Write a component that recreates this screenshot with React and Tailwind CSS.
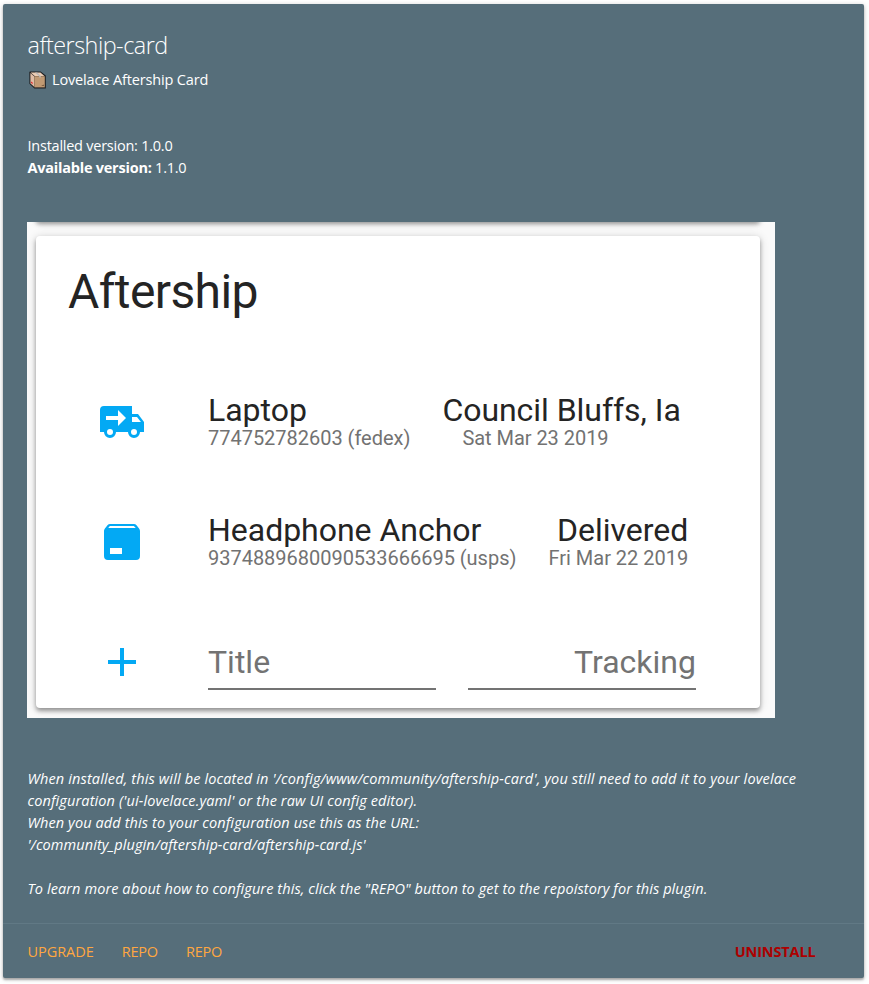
const TRUCK =
  'M3,4A2,2 0 0,0 1,6V17H3A3,3 0 0,0 6,20A3,3 0 0,0 9,17H15A3,3 0 0,0 18,20A3,3 0 0,0 21,17H23V12L20,8H17V4M10,6L14,10L10,14V11H4V9H10M17,9.5H19.5L21.47,12H17M6,15.5A1.5,1.5 0 0,1 7.5,17A1.5,1.5 0 0,1 6,18.5A1.5,1.5 0 0,1 4.5,17A1.5,1.5 0 0,1 6,15.5M18,15.5A1.5,1.5 0 0,1 19.5,17A1.5,1.5 0 0,1 18,18.5A1.5,1.5 0 0,1 16.5,17A1.5,1.5 0 0,1 18,15.5Z';
const PACKAGE =
  'M5.12,5L5.93,4H17.93L18.87,5M20.54,5.23L19.15,3.55C18.88,3.21 18.47,3 18,3H6C5.53,3 5.12,3.21 4.84,3.55L3.46,5.23C3.17,5.57 3,6 3,6.5V19A2,2 0 0,0 5,21H19A2,2 0 0,0 21,19V6.5C21,6 20.83,5.57 20.54,5.23M6,18H12V15H6V18Z';
const PLUS = 'M19,13H13V19H11V13H5V11H11V5H13V11H19V13Z';

function Icon({ path }) {
  return (
    <svg viewBox="0 0 24 24" className="h-12 w-12 shrink-0 fill-[#03a9f4]">
      <path fillRule="evenodd" d={path} />
    </svg>
  );
}

function ParcelEmoji() {
  return (
    <svg viewBox="0 0 18 18" className="h-[18px] w-[18px]">
      <path d="M1 .4h10.6l5.2 4.2v12.8H5.4L.4 12.8V1z" fill="#1d1d1f" />
      <path d="M1.6 1.4h9.8l4 3.6H5.6z" fill="#eccdb4" />
      <path d="M1.4 2l4 3.4v10.6l-4-3.6z" fill="#e0bda5" />
      <path d="M5.4 5.2h10.4v11.2H5.4z" fill="#c19a73" />
      <path d="M5.8 1.4h2.4l3.6 3.6v1.4h-1.6V5.2z" fill="#bdbab8" />
      <path d="M2 10.4l1.6 1v1.8L2 11.8z" fill="#e5262f" />
      <path d="M12.2 15h2.6v-1.6z" fill="#6d5139" />
    </svg>
  );
}

function Lines({ primary, secondary, secondaryClass = '' }) {
  return (
    <>
      <div className="h-8 whitespace-nowrap text-[32px] leading-[32px] text-[#242424]">{primary}</div>
      <div className="h-6 whitespace-nowrap text-[20px] leading-[24px] text-[#727272]">
        <span className={secondaryClass}>{secondary}</span>
      </div>
    </>
  );
}

function Parcel({ icon, title, number, children }) {
  return (
    <div className="flex h-[120px] pl-[62px] pt-4">
      <Icon path={icon} />
      <div className="-mt-1 ml-[62px] tracking-[-0.02px]">
        <Lines primary={title} secondary={number} />
      </div>
      {children}
    </div>
  );
}

export default function App() {
  return (
    <div className="h-[984px] bg-white pl-[3px] pt-1">
      <div className="flex h-[974px] w-[861px] flex-col rounded-[2px] bg-[#566e7a] font-['Open_Sans',sans-serif] text-[14.5px] leading-[22px] text-white shadow-[0_2px_2px_rgba(0,0,0,0.24),0_1px_5px_rgba(0,0,0,0.22)]">
        <div className="h-[919px] pl-[24.5px] pt-[23px]">
          <h1 className="h-9 whitespace-nowrap text-[23.4px] font-light leading-9 tracking-[-0.5px]">aftership-card</h1>
          <div className="mt-1.5 flex h-[22px] items-center gap-[5px] pl-[1.5px] tracking-[-0.15px]">
            <ParcelEmoji />
            <span>Lovelace Aftership Card</span>
          </div>
          <div className="mt-11 whitespace-nowrap tracking-[-0.24px]">
            <p>Installed version: 1.0.0</p>
            <p><b className="font-bold tracking-[-0.23px]">Available version:</b> 1.1.0</p>
          </div>

          <div className="-ml-[0.5px] mt-[43px] h-[496px] w-[748px] overflow-hidden bg-[#fafafa] pl-[9px] font-['Roboto',sans-serif] tracking-normal">
            <div className="-mt-5 h-5 w-[724px] rounded-[4px] bg-white shadow-[0_2px_4px_rgba(0,0,0,0.35),0_1px_8px_rgba(0,0,0,0.12)]" />
            <div className="mt-[14px] h-[472px] w-[724px] rounded-[4px] bg-white shadow-[0_3px_4px_rgba(0,0,0,0.35),0_1px_10px_rgba(0,0,0,0.16)]">
              <div className="h-[146px] pl-8 pt-7 text-[48px] leading-[56px] tracking-[-0.6px] text-[#242424]">Aftership</div>
              <Parcel icon={TRUCK} title="Laptop" number="774752782603 (fedex)">
                <div className="-mt-1 ml-8 tracking-[-0.04px]">
                  <Lines primary="Council Bluffs, Ia" secondary="Sat Mar 23 2019" secondaryClass="pl-5" />
                </div>
              </Parcel>
              <Parcel icon={PACKAGE} title="Headphone Anchor" number="9374889680090533666695 (usps)">
                <div className="-mt-1 ml-8 text-right">
                  <Lines primary="Delivered" secondary="Fri Mar 22 2019" />
                </div>
              </Parcel>
              <div className="flex pl-[62px] pt-4 text-[32px] leading-[48px] text-[#737373]">
                <Icon path={PLUS} />
                <div className="ml-[62px] h-[52px] w-[228px] border-b-2 border-[#737373]">Title</div>
                <div className="ml-8 h-[52px] w-[228px] border-b-2 border-[#737373] text-right">Tracking</div>
              </div>
            </div>
          </div>

          <div className="mt-[50px] whitespace-nowrap italic">
            <p className="tracking-[0.14px]">When installed, this will be located in '/config/www/community/aftership-card', you still need to add it to your lovelace</p>
            <p className="tracking-[0.12px]">configuration ('ui-lovelace.yaml' or the raw UI config editor).</p>
            <p className="tracking-[0.11px]">When you add this to your configuration use this as the URL:</p>
            <p className="tracking-[0.09px]">'/community_plugin/aftership-card/aftership-card.js'</p>
            <p className="mt-[22px] tracking-[0.09px]">To learn more about how to configure this, click the "REPO" button to get to the repoistory for this plugin.</p>
          </div>
        </div>
        <div className="flex h-[55px] items-center gap-7 border-t border-[#617985] pl-[24.5px] pr-[48.5px] pt-px text-[#ffa740]">
          <button className="tracking-[-0.05px]">UPGRADE</button>
          <button className="tracking-[-0.2px]">REPO</button>
          <button className="tracking-[-0.2px]">REPO</button>
          <button className="ml-auto font-bold tracking-[-0.15px] text-[#ad0000]">UNINSTALL</button>
        </div>
      </div>
    </div>
  );
}
